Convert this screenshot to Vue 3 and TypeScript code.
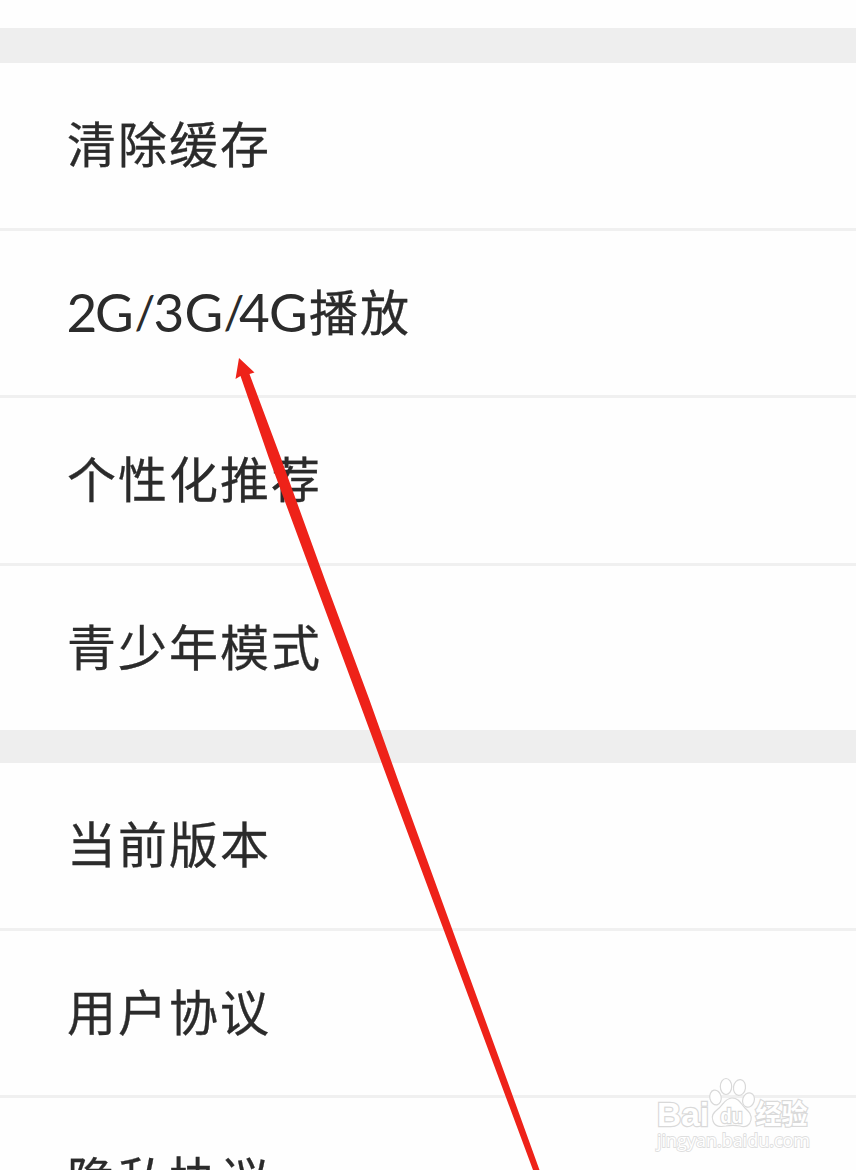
<script setup lang="ts">
interface Row {
  label: string
  latin?: boolean
}

const groups: Row[][] = [
  [{ label: '清除缓存' }, { label: '播放', latin: true }, { label: '个性化推荐' }, { label: '青少年模式' }],
  [{ label: '当前版本' }, { label: '用户协议' }, { label: '隐私协议' }],
]
</script>

<template>
  <main class="screen">
    <section v-for="(rows, g) in groups" :key="g" class="group">
      <div v-for="row in rows" :key="row.label" class="row">
        <svg v-if="row.latin" class="latin" width="242" height="60" viewBox="0 0 242 60">
          <text y="52" x="-0.5 28">2G<tspan class="slash" x="67.5" y="49">/</tspan><tspan x="86.5 117.5" y="52">3G</tspan><tspan class="slash" x="156.5" y="49">/</tspan><tspan x="172 202" y="52">4G</tspan></text>
        </svg>
        <span class="label">{{ row.label }}</span>
      </div>
    </section>

    <svg class="arrow" width="856" height="1170" viewBox="0 0 856 1170">
      <path
        d="M239 358 L254.5 372.5 L249.5 374 L280.5 457 L325 580 L369.5 700 L398 780 L507 1080 L539.5 1170 L533 1170 L499.5 1080 L388 780 L358.5 700 L314 580 L268.5 457 L240.5 376 L235.5 379 Z"
      />
    </svg>

    <svg class="mark" width="170" height="90" viewBox="650 1070 170 90">
      <g class="outline">
        <text class="bai" x="657" y="1126" textLength="52" lengthAdjust="spacingAndGlyphs">Bai</text>
        <ellipse cx="715.5" cy="1097.5" rx="5.7" ry="7.5" transform="rotate(-12 715.5 1097.5)" />
        <ellipse cx="726" cy="1086.5" rx="5.7" ry="8" />
        <ellipse cx="739.5" cy="1087.5" rx="6" ry="8" transform="rotate(8 739.5 1087.5)" />
        <ellipse cx="748.5" cy="1100" rx="5.8" ry="7.3" transform="rotate(18 748.5 1100)" />
        <path
          d="M732 1098 C725 1098 723 1105 718 1109 C713 1113 711 1116 713 1121 C715 1127 720 1127 726 1126 C731 1125 735 1125 740 1126 C746 1128 750 1125 751 1120 C752 1114 748 1111 745 1108 C741 1104 739 1098 732 1098 Z"
        />
        <text class="du" x="720.5" y="1122.5" textLength="22" lengthAdjust="spacingAndGlyphs">du</text>
        <text class="jingyan" x="755.5" y="1124" textLength="52" lengthAdjust="spacingAndGlyphs">经验</text>
        <text class="url" x="657" y="1146.5" textLength="153" lengthAdjust="spacingAndGlyphs">jingyan.baidu.com</text>
      </g>
    </svg>
  </main>
</template>

<style>
body {
  margin: 0;
  overflow: hidden;
}
</style>

<style scoped>
.screen {
  position: relative;
  box-sizing: border-box;
  width: 856px;
  height: 1170px;
  padding-top: 28px;
  overflow: hidden;
  background: #fefefe;
  font-family: "Noto Sans CJK SC", sans-serif;
  color: #2b2b2b;
}

.group {
  border-top: 35px solid #eeeeee;
}

.group + .group {
  border-top-width: 33px;
}

.row {
  display: flex;
  align-items: center;
  box-sizing: border-box;
  height: 167.5px;
  padding: 0 0 6px 67px;
  border-bottom: 3px solid #f0f0f0;
}

.row:last-child {
  height: 164.5px;
  border-bottom: 0;
}

.label {
  font-size: 49px;
  line-height: 60px;
  letter-spacing: 2px;
  white-space: nowrap;
  -webkit-text-stroke: 0.3px #2b2b2b;
}

.latin {
  flex: none;
  overflow: visible;
}

.latin text {
  font-family: Lato, sans-serif;
  font-size: 53px;
  fill: #2b2b2b;
}

.latin .slash {
  font-size: 46px;
}

.arrow {
  position: absolute;
  inset: 0;
}

.arrow path {
  fill: #ee2219;
}

.mark {
  position: absolute;
  left: 650px;
  top: 1070px;
}

.outline {
  fill: #ffffff;
  stroke: #d9d9d9;
  stroke-width: 1.2;
}

.outline text {
  font-family: "Liberation Sans", sans-serif;
  font-weight: 700;
  paint-order: stroke;
  stroke-width: 2.4;
}

.bai {
  font-size: 33px;
}

.outline .du {
  font-size: 20px;
}

.outline .jingyan {
  font-family: "Noto Sans CJK SC", sans-serif;
  font-size: 27px;
}

.outline .url {
  font-family: "Open Sans", sans-serif;
  font-weight: 400;
  font-size: 18px;
  stroke: #dedede;
  stroke-width: 1.8;
}
</style>
